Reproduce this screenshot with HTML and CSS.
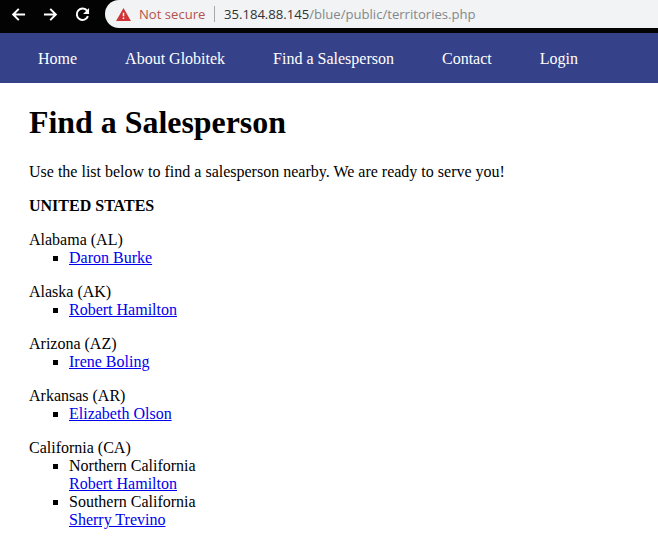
FILE: index.html
```html
<!DOCTYPE html>
<html lang="en">
<head>
<meta charset="utf-8">
<title>Find a Salesperson</title>
<link rel="stylesheet" href="styles.css">
</head>
<body>
<div class="browser">
  <svg class="icon back" viewBox="0 0 16 16"><path d="M15 8H2.5M8.3 2L2.3 8 8.3 14"/></svg>
  <svg class="icon forward" viewBox="0 0 16 16"><path d="M1 8H13.5M7.7 2L13.7 8 7.7 14"/></svg>
  <svg class="icon reload" viewBox="0 0 16 16"><path d="M13 4.2A6.1 6.1 0 1 0 13.8 9.8"/><path class="tip" d="M15 1v6.4H8.6z"/></svg>
  <div class="address">
    <svg class="warning" viewBox="0 0 16 14"><path d="M8 0L16 14H0z"/><path class="mark" d="M7.2 5h1.6v4H7.2zM7.2 10.3h1.6v1.6H7.2z"/></svg>
    <span class="insecure">Not secure</span>
    <span class="divider"></span>
    <span class="url"><span class="host">35.184.88.145</span>/blue/public/territories.php</span>
  </div>
</div>
<nav class="nav">
  <a>Home</a><a>About Globitek</a><a>Find a Salesperson</a><a>Contact</a><a>Login</a>
</nav>
<main class="content">
  <h1>Find a Salesperson</h1>
  <p>Use the list below to find a salesperson nearby. We are ready to serve you!</p>
  <p><strong>UNITED STATES</strong></p>
  <section>Alabama (AL)<ul><li><a href="#">Daron Burke</a></li></ul></section>
  <section>Alaska (AK)<ul><li><a href="#">Robert Hamilton</a></li></ul></section>
  <section>Arizona (AZ)<ul><li><a href="#">Irene Boling</a></li></ul></section>
  <section>Arkansas (AR)<ul><li><a href="#">Elizabeth Olson</a></li></ul></section>
  <section>California (CA)<ul><li>Northern California<br><a href="#">Robert Hamilton</a></li><li>Southern California<br><a href="#">Sherry Trevino</a></li></ul></section>
</main>
</body>
</html>
```
FILE: styles.css
```css
body { margin: 0; background: #fff; color: #000; font: 16px/18px "Liberation Serif", serif; overflow: hidden; }
.browser { height: 33px; background: #030303; display: flex; align-items: flex-start; overflow: hidden; }
.icon { width: 15px; height: 15px; flex: none; margin-top: 7px; fill: none; stroke: #fff; stroke-width: 2.1; }
.back { margin-left: 11px; }
.forward { margin-left: 17px; }
.reload { margin-left: 17px; }
.icon .tip { fill: #fff; stroke: none; }
.address { flex: 1; height: 28px; margin-left: 15px; background: #f1f3f4; border-radius: 14px 0 0 14px; display: flex; align-items: center; font: 13.1px/28px "Open Sans", sans-serif; color: #84878a; white-space: nowrap; }
.warning { width: 15px; height: 13px; margin-left: 11px; fill: #d13438; }
.mark { fill: #fff; }
.insecure { width: 67px; margin-left: 8px; color: #b5524d; }
.divider { width: 1px; height: 16px; margin: 0 9px 0 8px; background: #a6a8aa; }
.host { color: #303236; }
.nav { height: 48px; padding: 2px 0 0 38px; background: #354289; display: flex; align-items: center; gap: 48px; color: #fff; }
.content { padding-left: 29px; }
h1 { margin: 22px 0; font-size: 31.9px; line-height: 36px; }
p { margin: 0 0 16px; }
section { margin-bottom: 16px; }
ul { margin: 0; padding-left: 40px; list-style: square; }
a[href] { color: #0000ee; text-decoration: underline; }
```
